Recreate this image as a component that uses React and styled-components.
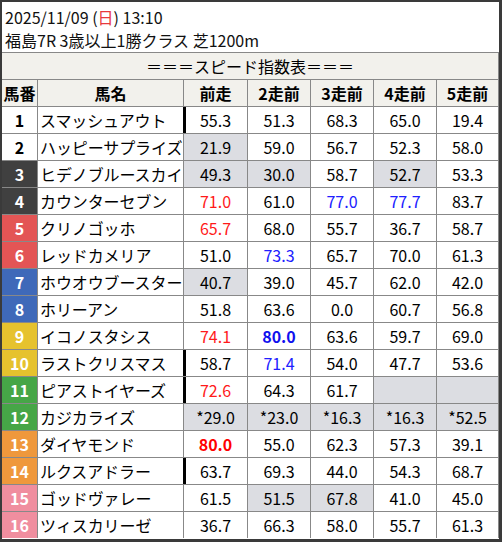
import React from "react";
import styled, { createGlobalStyle } from "styled-components";

const GlobalStyle = createGlobalStyle`
  html, body {
    margin: 0;
    padding: 0;
    background: #3a3a3a;
  }
  body {
    font-family: "Noto Sans CJK JP", "Noto Sans", sans-serif;
    color: #000;
  }
`;

const frameColors = {
  1: { bg: "#ffffff", fg: "#000" },
  2: { bg: "#ffffff", fg: "#000" },
  3: { bg: "#404040", fg: "#fff" },
  4: { bg: "#404040", fg: "#fff" },
  5: { bg: "#e35555", fg: "#fff" },
  6: { bg: "#e35555", fg: "#fff" },
  7: { bg: "#3f69b9", fg: "#fff" },
  8: { bg: "#3f69b9", fg: "#fff" },
  9: { bg: "#e6c22e", fg: "#fff" },
  10: { bg: "#e6c22e", fg: "#fff" },
  11: { bg: "#46a647", fg: "#fff" },
  12: { bg: "#46a647", fg: "#fff" },
  13: { bg: "#ef983c", fg: "#fff" },
  14: { bg: "#ef983c", fg: "#fff" },
  15: { bg: "#f08e9f", fg: "#fff" },
  16: { bg: "#f08e9f", fg: "#fff" }
};

// cell: [value, tone, gray]  tone: r = red, rb = red bold, b = blue, bb = blue bold
const horses = [
  { no: 1, name: "スマッシュアウト", bar: true, runs: [["55.3"], ["51.3"], ["68.3"], ["65.0"], ["19.4"]] },
  { no: 2, name: "ハッピーサプライズ", runs: [["21.9", "", 1], ["59.0"], ["56.7"], ["52.3"], ["58.0"]] },
  { no: 3, name: "ヒデノブルースカイ", runs: [["49.3", "", 1], ["30.0", "", 1], ["58.7"], ["52.7", "", 1], ["53.3"]] },
  { no: 4, name: "カウンターセブン", runs: [["71.0", "r"], ["61.0"], ["77.0", "b"], ["77.7", "b"], ["83.7"]] },
  { no: 5, name: "クリノゴッホ", runs: [["65.7", "r"], ["68.0"], ["55.7"], ["36.7"], ["58.7"]] },
  { no: 6, name: "レッドカメリア", runs: [["51.0"], ["73.3", "b"], ["65.7"], ["70.0"], ["61.3"]] },
  { no: 7, name: "ホウオウブースター", runs: [["40.7", "", 1], ["39.0"], ["45.7"], ["62.0"], ["42.0"]] },
  { no: 8, name: "ホリーアン", runs: [["51.8"], ["63.6"], ["0.0"], ["60.7"], ["56.8"]] },
  { no: 9, name: "イコノスタシス", runs: [["74.1", "r"], ["80.0", "bb"], ["63.6"], ["59.7"], ["69.0"]] },
  { no: 10, name: "ラストクリスマス", bar: true, runs: [["58.7"], ["71.4", "b"], ["54.0"], ["47.7"], ["53.6"]] },
  { no: 11, name: "ピアストイヤーズ", bar: true, runs: [["72.6", "r"], ["64.3"], ["61.7"], ["", "", 1], ["", "", 1]] },
  { no: 12, name: "カジカライズ", runs: [["*29.0", "", 1], ["*23.0", "", 1], ["*16.3", "", 1], ["*16.3", "", 1], ["*52.5", "", 1]] },
  { no: 13, name: "ダイヤモンド", runs: [["80.0", "rb"], ["55.0"], ["62.3"], ["57.3"], ["39.1"]] },
  { no: 14, name: "ルクスアドラー", bar: true, runs: [["63.7"], ["69.3"], ["44.0"], ["54.3"], ["68.7"]] },
  { no: 15, name: "ゴッドヴァレー", runs: [["61.5"], ["51.5", "", 1], ["67.8", "", 1], ["41.0"], ["45.0"]] },
  { no: 16, name: "ツィスカリーゼ", runs: [["36.7"], ["66.3"], ["58.0"], ["55.7"], ["61.3"]] }
];

const heads = ["前走", "2走前", "3走前", "4走前", "5走前"];

const toneColor = { r: "#ff1a1a", rb: "#ff0000", b: "#2020ff", bb: "#1010ee" };

const App = () => {
  return (
    <>
      <GlobalStyle />
      <Frame>
        <Info>
          <InfoLine>
            2025/11/09 (<Sun>日</Sun>) 13:10
          </InfoLine>
          <InfoLine>福島7R 3歳以上1勝クラス 芝1200m</InfoLine>
        </Info>
        <Table>
          <Title>＝＝＝スピード指数表＝＝＝</Title>
          <Head>馬番</Head>
          <Head>馬名</Head>
          {heads.map(h => (
            <Head key={h}>{h}</Head>
          ))}
          {horses.map(horse => (
            <React.Fragment key={horse.no}>
              <Num $bg={frameColors[horse.no].bg} $fg={frameColors[horse.no].fg}>
                {horse.no}
              </Num>
              <Name>{horse.name}</Name>
              {horse.runs.map(([value, tone, gray], i) => (
                <Score
                  key={i}
                  $gray={!!gray}
                  $color={toneColor[tone] || "#000"}
                  $bold={tone === "rb" || tone === "bb"}
                  $bar={i === 0 && horse.bar}
                >
                  {value}
                </Score>
              ))}
            </React.Fragment>
          ))}
        </Table>
      </Frame>
    </>
  );
};

const Frame = styled.div`
  margin: 2px 3px 0 2px;
  width: 497px;
  height: 537px;
  background: #ffffff;
  display: flex;
  flex-direction: column;
  overflow: hidden;
`;

const Info = styled.div`
  height: 51px;
  box-sizing: border-box;
  padding: 4px 0 0 3px;
  border-bottom: 1px solid #888;
  background: #fff;
`;

const InfoLine = styled.div`
  font-size: 16px;
  line-height: 23px;
  white-space: nowrap;
  color: #111;
`;

const Sun = styled.span`
  color: #e8383d;
`;

const Table = styled.div`
  display: grid;
  grid-template-columns: 35px 145px 63px 62px 62px 62px 61px;
  grid-auto-rows: 26px;
  gap: 1px;
  background: #888;
  border-right: 1px solid #888;
`;

const Title = styled.div`
  grid-column: 1 / -1;
  background: #f2f1ec;
  font-size: 16px;
  line-height: 26px;
  text-align: center;
  white-space: nowrap;
`;

const Head = styled.div`
  background: #f2f1ec;
  font-size: 16px;
  font-weight: 700;
  line-height: 26px;
  text-align: center;
  white-space: nowrap;
`;

const Num = styled.div`
  background: ${p => p.$bg};
  color: ${p => p.$fg};
  font-size: 16px;
  font-weight: 700;
  line-height: 26px;
  text-align: center;
`;

const Name = styled.div`
  background: #fff;
  font-size: 16px;
  line-height: 26px;
  padding-left: 2px;
  white-space: nowrap;
  overflow: hidden;
  letter-spacing: -0.1px;
`;

const Score = styled.div`
  background: ${p => (p.$gray ? "#dcdde2" : "#fff")};
  color: ${p => p.$color};
  font-weight: ${p => (p.$bold ? 700 : 400)};
  font-size: 16px;
  line-height: 26px;
  text-align: center;
  white-space: nowrap;
  box-shadow: ${p => (p.$bar ? "-1px 0 0 #000, inset 2px 0 0 #000" : "none")};
`;

export default App;
